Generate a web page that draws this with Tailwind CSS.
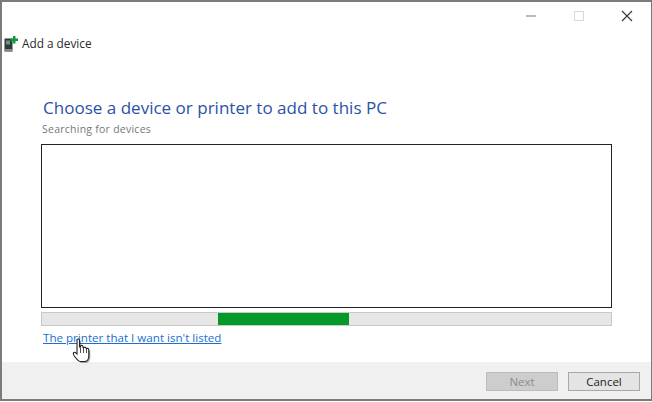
<!DOCTYPE html>
<html lang="en">
<head>
  <meta charset="UTF-8" />
  <title>Add a device</title>
  <script src="https://cdn.jsdelivr.net/npm/@tailwindcss/browser@4"></script>
</head>
<body class="w-[652px] h-[402px] overflow-hidden bg-white font-['Open_Sans',sans-serif]">
  <div class="relative flex flex-col w-[652px] h-[401px] border-t-2 border-l-2 border-r border-b-2 border-[#7b7b7b] bg-white">
    <!-- title bar -->
    <div class="flex justify-end items-center h-[28px] shrink-0">
      <svg class="mr-[36px]" width="12" height="12" viewBox="0 0 12 12"><path d="M1 6h10" stroke="#8a8a8a" stroke-width="1.200"/></svg>
      <svg class="mr-[36px]" width="12" height="12" viewBox="0 0 12 12"><rect x="1.500" y="1.500" width="9" height="9" fill="none" stroke="#d8d8d8"/></svg>
      <svg class="mr-[18px]" width="12" height="12" viewBox="0 0 12 12"><path d="M1 1l10 10M11 1L1 11" stroke="#3a3a3a" stroke-width="1.200"/></svg>
    </div>

    <!-- header -->
    <div class="flex items-center h-[28px] pl-[2px] shrink-0">
      <svg width="14" height="16" viewBox="0 0 14 16">
        <rect x="0.500" y="2.500" width="8" height="13" fill="#2f3a3a"/>
        <rect x="2" y="4.500" width="4" height="4" fill="#6f8f8a"/>
        <rect x="1" y="13" width="7" height="2.500" fill="#8a8a8a"/>
        <path d="M9 0h2.500v2.500H14V5h-2.500v2.500H9V5H6.500V2.500H9z" fill="#0b9b3a"/>
      </svg>
      <span class="ml-[4px] text-[11.800px] text-[#2b2b2b] whitespace-nowrap">Add a device</span>
    </div>

    <div class="flex flex-col flex-1 pl-[39px] pr-[39px]">
      <h1 class="mt-[38px] pl-[2px] text-[17.050px] leading-[24px] text-[#2a52a5] whitespace-nowrap">Choose a device or printer to add to this PC</h1>
      <p class="mt-[2px] pl-[1px] text-[10.500px] leading-[14px] text-[#777] tracking-[0.250px]">Searching for devices</p>
      <div class="mt-[8px] h-[164px] shrink-0 border border-[#222] bg-white"></div>
      <!-- progress -->
      <div class="mt-[4px] h-[14px] shrink-0 flex border border-[#c9c9c9] bg-[#e6e6e6]">
        <div class="ml-[176px] w-[131px] bg-[#039a2a]"></div>
      </div>
      <a class="mt-[4px] pl-[2px] text-[11.600px] leading-[16px] text-[#1a6fd0] underline whitespace-nowrap">The printer that I want isn't listed</a>
    </div>

    <!-- footer -->
    <div class="flex justify-end items-center gap-[10px] h-[37px] shrink-0 pr-[11px] pt-[2px] bg-[#f0f0f0]">
      <button class="w-[72px] h-[19px] border border-[#bcbcbc] bg-[#cdcdcd] text-[11.500px] leading-none text-[#8c8c8c]">Next</button>
      <button class="w-[72px] h-[19px] border border-[#a8a8a8] bg-[#e4e4e4] text-[11.500px] leading-none text-[#222]">Cancel</button>
    </div>

    <!-- mouse pointer over the link -->
    <svg class="absolute left-[68px] top-[335px]" width="24" height="28" viewBox="0 0 24 28">
      <path d="M7 2.500c1-1 2.500-.5 2.500 1V10l1 .2V9c1-1 2.300-.7 2.500.5v1l.8.200c.9-.9 2.200-.6 2.400.6l.3.4c1-.6 2.200-.2 2.300 1V19c0 3-1.700 5.500-4.500 5.500h-4C8 24.500 6.500 22 4 18.500c-.8-1.200-1-2.300-.3-3 .8-.7 2 0 3.300 1.500z" fill="#000" fill-opacity=".35" transform="translate(1.500 1.500)"/>
      <path d="M7 2.500c1-1 2.500-.5 2.500 1V10l1 .2V9c1-1 2.300-.7 2.500.5v1l.8.200c.9-.9 2.200-.6 2.400.6l.3.4c1-.6 2.200-.2 2.300 1V19c0 3-1.700 5.500-4.500 5.500h-4C8 24.500 6.500 22 4 18.500c-.8-1.200-1-2.300-.3-3 .8-.7 2 0 3.300 1.500z" fill="#fff" stroke="#222" stroke-width="1.100"/>
      <path d="M10.500 11v5M13.500 11v5M16.500 12v4" stroke="#222" stroke-width=".8"/>
    </svg>
  </div>
</body>
</html>
